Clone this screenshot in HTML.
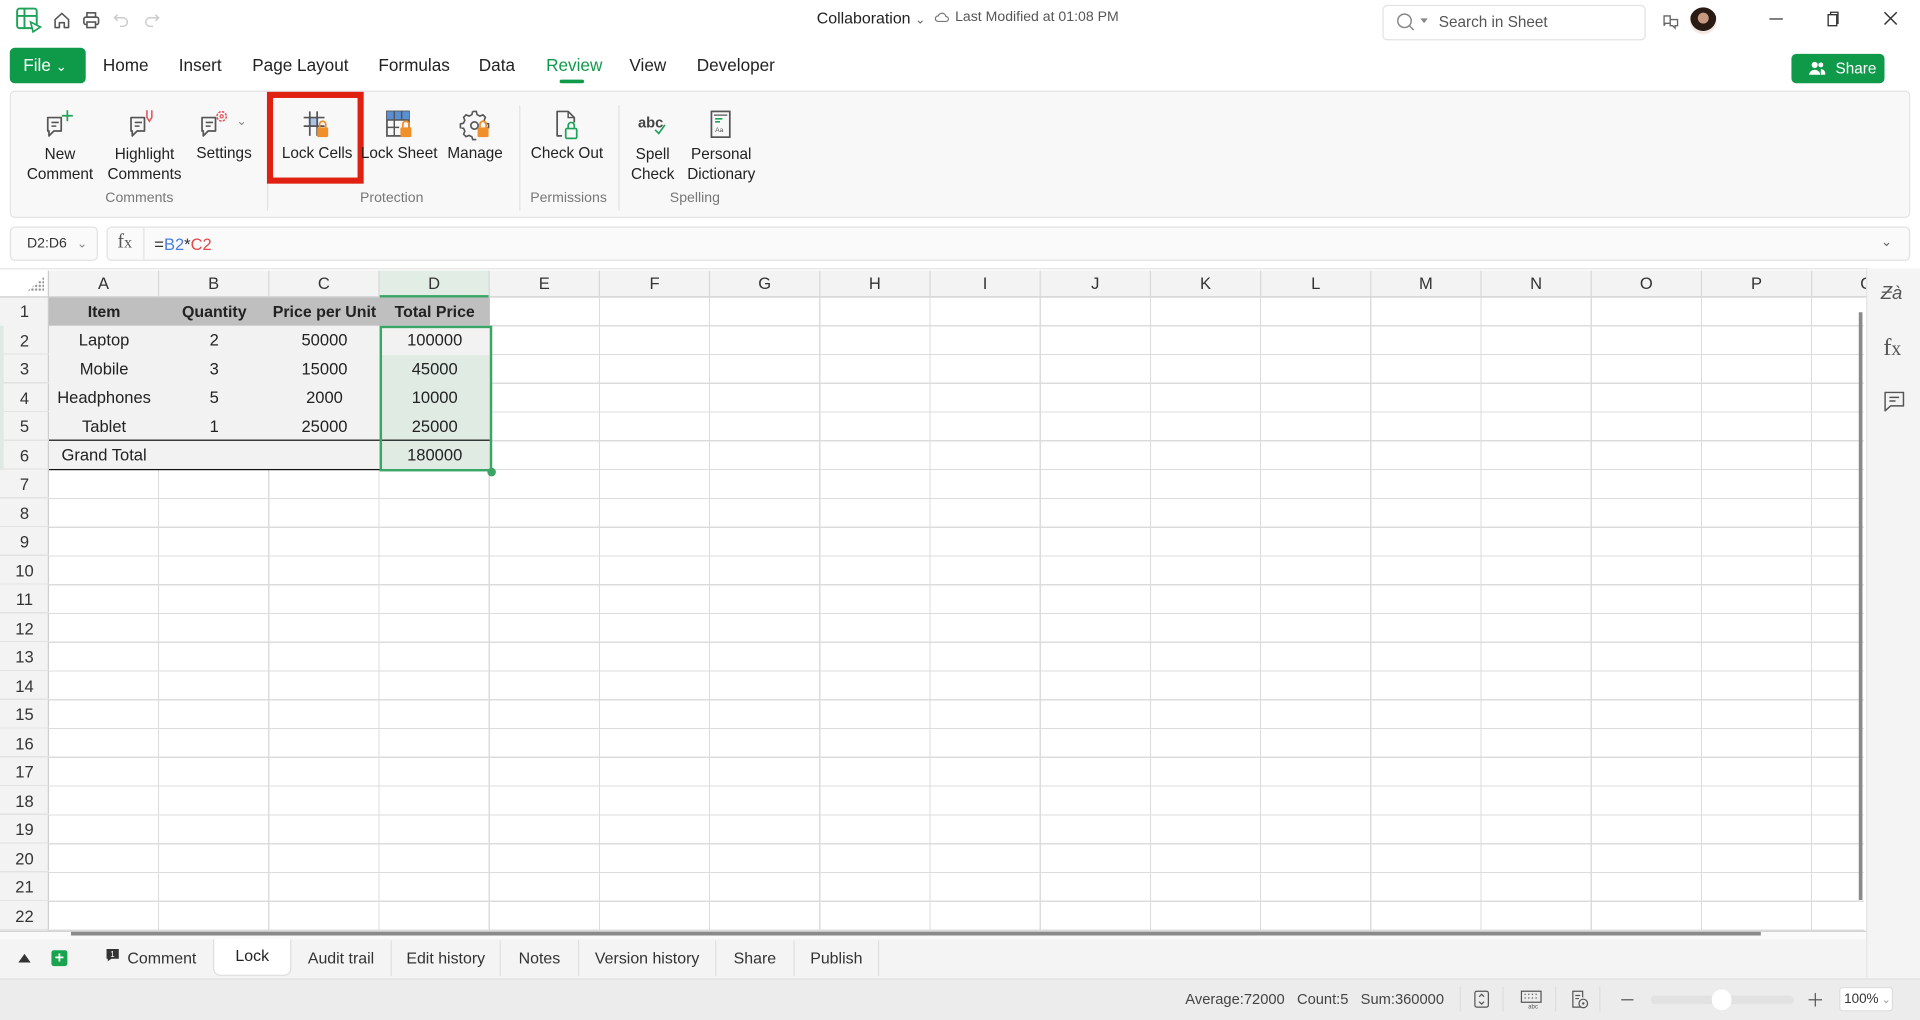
<!DOCTYPE html>
<html><head><meta charset="utf-8"><style>
*{box-sizing:border-box;margin:0;padding:0}
html,body{width:1920px;height:1020px;overflow:hidden;background:#fff}
#s{position:absolute;left:0;top:0;width:1568px;height:833px;transform:scale(1.22449);transform-origin:0 0;font-family:"Liberation Sans",sans-serif;color:#222;background:#fff}
.a{position:absolute}
.menu{font-size:14px;top:45px;color:#222}
.rb{position:absolute;top:118px;font-size:12.5px;text-align:center;line-height:16px;color:#222}
.grp{position:absolute;top:156px;font-size:11.5px;color:#777}
.ch{position:absolute;top:221px;height:22px;width:90px;text-align:center;font-size:13.5px;line-height:22px;color:#333;border-right:1px solid #d8d8d8}
.rh{position:absolute;left:0;width:40px;height:23.5px;text-align:center;font-size:13.5px;line-height:23.5px;color:#333}
.c{position:absolute;height:23.5px;width:90px;text-align:center;font-size:13.5px;line-height:23.5px;color:#222}
.hb{font-weight:bold;font-size:13px}
.tab{position:absolute;top:768px;height:29px;font-size:13px;line-height:29px;color:#333;border-right:1px solid #e0e0e0;text-align:center}
</style></head><body><div id="s">
<svg class="a" style="left:12px;top:6px" width="24" height="22" viewBox="0 0 24 22"><rect x="2" y="1" width="16" height="16" rx="2" fill="none" stroke="#1fa35a" stroke-width="1.6"/><path d="M2 7h16M8 1v16" stroke="#1fa35a" stroke-width="1.6"/><path d="M13 12l8 4-6 4z" fill="#fff" stroke="#1fa35a" stroke-width="1.4"/></svg>
<svg class="a" style="left:43px;top:9px" width="15" height="15" viewBox="0 0 15 15"><path d="M2 7l5.5-5 5.5 5v6.5h-3.5v-4h-4v4H2z" fill="none" stroke="#555" stroke-width="1.3" stroke-linejoin="round"/></svg>
<svg class="a" style="left:67px;top:9px" width="15" height="15" viewBox="0 0 15 15"><rect x="4" y="1.5" width="7" height="3.5" fill="none" stroke="#555" stroke-width="1.3"/><rect x="1.5" y="5" width="12" height="6" rx="1.5" fill="none" stroke="#555" stroke-width="1.3"/><rect x="4" y="9" width="7" height="4.5" fill="#fff" stroke="#555" stroke-width="1.3"/></svg>
<svg class="a" style="left:92px;top:9px" width="14" height="14" viewBox="0 0 14 14"><path d="M4 3L1.5 5.5 4 8M1.5 5.5h7a3.5 3.5 0 010 7H6" fill="none" stroke="#ccc" stroke-width="1.2"/></svg>
<svg class="a" style="left:117px;top:9px" width="14" height="14" viewBox="0 0 14 14"><path d="M10 3l2.5 2.5L10 8M12.5 5.5h-7a3.5 3.5 0 000 7H8" fill="none" stroke="#ccc" stroke-width="1.2"/></svg>
<div class="a" style="left:667px;top:7px;font-size:13px;color:#222">Collaboration <span style="font-size:10px;color:#666">&#8964;</span></div>
<svg class="a" style="left:763px;top:9px" width="12" height="10" viewBox="0 0 12 10"><path d="M3 8.5h6.5a2 2 0 000-4 3.2 3.2 0 00-6.2-.5A2.2 2.2 0 003 8.5z" fill="none" stroke="#777" stroke-width="1"/></svg>
<div class="a" style="left:780px;top:8px;font-size:11.5px;color:#555">Last Modified at 01:08 PM</div>
<div class="a" style="left:1129px;top:4px;width:215px;height:29px;border:1px solid #e2e2e2;border-radius:4px;background:#fff"></div>
<svg class="a" style="left:1140px;top:10px" width="30" height="17" viewBox="0 0 30 17"><circle cx="7" cy="7" r="5.5" fill="none" stroke="#888" stroke-width="1.2"/><path d="M11 11l3.5 3.5" stroke="#888" stroke-width="1.2"/><path d="M20 5h6l-3 4z" fill="#888"/></svg>
<div class="a" style="left:1175px;top:11px;font-size:12.5px;color:#555">Search in Sheet</div>
<svg class="a" style="left:1357px;top:9px" width="16" height="16" viewBox="0 0 16 16"><path d="M2 4h5v6H3l-1 2z M7 7h6v5h-2v2l-2-2H7z" fill="none" stroke="#666" stroke-width="1.1"/></svg>
<div class="a" style="left:1380px;top:6px;width:22px;height:22px;border-radius:50%;background:radial-gradient(circle at 50% 40%,#c89880 0 25%,#2a1a14 27% 60%,#f3e8e4 62%)"></div>
<div class="a" style="left:1445px;top:15px;width:11px;height:1.3px;background:#333"></div>
<svg class="a" style="left:1491px;top:9px" width="12" height="13" viewBox="0 0 12 13"><rect x="2" y="3" width="7" height="9" fill="none" stroke="#333" stroke-width="1.1"/><path d="M4 3V1h6v9H9" fill="none" stroke="#333" stroke-width="1.1"/></svg>
<svg class="a" style="left:1538px;top:9px" width="12" height="12" viewBox="0 0 12 12"><path d="M1 1l10 10M11 1L1 11" stroke="#333" stroke-width="1.2"/></svg>
<div class="a" style="left:8px;top:39px;width:62px;height:29px;border-radius:4px;background:#0f9a4a;color:#fff;font-size:14px;line-height:29px;padding-left:11px">File <span style="font-size:11px">&#8964;</span></div>
<div class="a menu" style="left:84px">Home</div>
<div class="a menu" style="left:146px">Insert</div>
<div class="a menu" style="left:206px">Page Layout</div>
<div class="a menu" style="left:309px">Formulas</div>
<div class="a menu" style="left:391px">Data</div>
<div class="a menu" style="left:446px;color:#0f9a4a">Review</div>
<div class="a" style="left:457px;top:65px;width:20px;height:3px;border-radius:2px;background:#0f9a4a"></div>
<div class="a menu" style="left:514px">View</div>
<div class="a menu" style="left:569px">Developer</div>
<div class="a" style="left:1463px;top:44px;width:76px;height:24px;border-radius:4px;background:#0f9a4a;color:#fff;font-size:12.5px;line-height:24px;padding-left:36px">Share</div>
<svg class="a" style="left:1477px;top:49px" width="14" height="13" viewBox="0 0 14 13"><circle cx="5" cy="4" r="2.5" fill="#fff"/><path d="M0.5 12a4.5 4 0 019 0z" fill="#fff"/><circle cx="10" cy="4" r="2" fill="#fff"/><path d="M10 7.5a3.5 3.5 0 013.5 4.5H10z" fill="#fff"/></svg>
<div class="a" style="left:8px;top:74px;width:1552px;height:104px;background:#f8f8f8;border:1px solid #e3e3e3;border-radius:4px"></div>
<div class="a" style="left:218px;top:86px;width:1px;height:86px;background:#e2e2e2"></div>
<div class="a" style="left:424px;top:86px;width:1px;height:86px;background:#e2e2e2"></div>
<div class="a" style="left:505px;top:86px;width:1px;height:86px;background:#e2e2e2"></div>
<svg class="a" style="left:36px;top:89px" width="26" height="26" viewBox="0 0 26 26"><path d="M3 7h11v11H8l-4 4v-4H3z" fill="none" stroke="#555" stroke-width="1.4" stroke-linejoin="round"/><path d="M6 11h6M6 14h4" stroke="#555" stroke-width="1.3"/><path d="M19 1v9M14.5 5.5h9" stroke="#1fa35a" stroke-width="1.4"/></svg>
<svg class="a" style="left:104px;top:89px" width="26" height="26" viewBox="0 0 26 26"><path d="M3 7h11v11H8l-4 4v-4H3z" fill="none" stroke="#555" stroke-width="1.4" stroke-linejoin="round"/><path d="M6 11h6M6 14h4" stroke="#555" stroke-width="1.3"/><path d="M16 1v6l2 3 2-3V1" fill="none" stroke="#e05560" stroke-width="1.3"/></svg>
<svg class="a" style="left:162px;top:89px" width="26" height="26" viewBox="0 0 26 26"><path d="M3 7h11v11H8l-4 4v-4H3z" fill="none" stroke="#555" stroke-width="1.4" stroke-linejoin="round"/><path d="M6 11h6M6 14h4" stroke="#555" stroke-width="1.3"/><circle cx="19" cy="6" r="3.8" fill="none" stroke="#e05560" stroke-width="1.3" stroke-dasharray="2 1"/><circle cx="19" cy="6" r="1.3" fill="none" stroke="#e05560"/></svg>
<div class="a" style="left:193px;top:94px;font-size:10px;color:#888">&#8964;</div>
<div class="a" style="left:218px;top:75px;width:79px;height:75px;border:5px solid #e02010"></div>
<svg class="a" style="left:246px;top:89px" width="26" height="26" viewBox="0 0 26 26"><rect x="6" y="7" width="8" height="7" fill="#a9c4e6"/><path d="M7 2v20M13 2v20M2 7h17M2 14h17" stroke="#555" stroke-width="1.4"/><rect x="13" y="15" width="9" height="8" rx="1" fill="#f0902a"/><path d="M15 15v-2.5a2.5 2.5 0 015 0V15" fill="none" stroke="#f0902a" stroke-width="1.4"/></svg>
<svg class="a" style="left:313px;top:89px" width="26" height="26" viewBox="0 0 26 26"><rect x="3" y="2" width="18" height="20" fill="none" stroke="#555" stroke-width="1.4"/><rect x="3" y="2" width="18" height="7" fill="#5b8fd4"/><path d="M9 2v20M15 2v7M3 9h18M3 15h10" stroke="#555" stroke-width="1.2"/><rect x="14" y="15" width="9" height="8" rx="1" fill="#f0902a"/><path d="M16 15v-2.5a2.5 2.5 0 015 0V15" fill="none" stroke="#f0902a" stroke-width="1.4"/></svg>
<svg class="a" style="left:375px;top:89px" width="26" height="26" viewBox="0 0 26 26"><path d="M11 2h3l.6 2.6 2.3 1.2 2.5-1 2 2-1 2.5 1.1 2.3 2.5.6v3l-2.6.6M11 2l-.6 2.6-2.3 1.2-2.5-1-2 2 1 2.5L3.5 11.6 1 12.2v3l2.6.6 1 2.3-1 2.5 2 2 2.5-1 2.3 1.1.6 2.3h3" fill="none" stroke="#555" stroke-width="1.3"/><circle cx="12.5" cy="13.5" r="3" fill="none" stroke="#555" stroke-width="1.3"/><rect x="15" y="15" width="9" height="8" rx="1" fill="#f0902a"/><path d="M17 15v-2.5a2.5 2.5 0 015 0V15" fill="none" stroke="#f0902a" stroke-width="1.4"/></svg>
<svg class="a" style="left:450px;top:89px" width="26" height="26" viewBox="0 0 26 26"><path d="M9 22H5V2h9l5 5v4" fill="none" stroke="#555" stroke-width="1.4" stroke-linejoin="round"/><path d="M14 2v5h5" fill="none" stroke="#555" stroke-width="1.2"/><rect x="12" y="16" width="9" height="8" rx="1" fill="none" stroke="#1fa35a" stroke-width="1.4"/><path d="M14 16v-2.5a2.5 2.5 0 015 0V16" fill="none" stroke="#1fa35a" stroke-width="1.4"/></svg>
<div class="a" style="left:521px;top:93px;font-size:12px;font-weight:bold;color:#444">abc</div>
<svg class="a" style="left:533px;top:100px" width="12" height="12" viewBox="0 0 12 12"><path d="M2 6l3 3 5-7" fill="none" stroke="#1fa35a" stroke-width="1.4"/></svg>
<svg class="a" style="left:576px;top:89px" width="26" height="26" viewBox="0 0 26 26"><rect x="5" y="2" width="15" height="21" fill="none" stroke="#555" stroke-width="1.4"/><path d="M7 5h11" stroke="#555"/><path d="M8 8h6M8 10.5h4" stroke="#1fa35a" stroke-width="1.3"/><text x="8" y="19" font-size="5.5" font-family="Liberation Sans" fill="#555">Aa</text></svg>
<div class="rb" style="left:20px;width:58px">New<br>Comment</div>
<div class="rb" style="left:86px;width:64px">Highlight<br>Comments</div>
<div class="rb" style="left:154px;width:58px;top:117px">Settings</div>
<div class="rb" style="left:226px;width:66px;top:117px">Lock Cells</div>
<div class="rb" style="left:294px;width:64px;top:117px">Lock Sheet</div>
<div class="rb" style="left:360px;width:56px;top:117px">Manage</div>
<div class="rb" style="left:430px;width:66px;top:117px">Check Out</div>
<div class="rb" style="left:510px;width:46px">Spell<br>Check</div>
<div class="rb" style="left:558px;width:62px">Personal<br>Dictionary</div>
<div class="grp" style="left:86px">Comments</div>
<div class="grp" style="left:294px">Protection</div>
<div class="grp" style="left:433px">Permissions</div>
<div class="grp" style="left:547px">Spelling</div>
<div class="a" style="left:8px;top:185px;width:72px;height:28px;border:1px solid #e2e2e2;border-radius:4px;background:#fafafa;font-size:11.5px;line-height:26px;padding-left:13px;color:#333">D2:D6 <span style="color:#888;font-size:10px;margin-left:5px">&#8964;</span></div>
<div class="a" style="left:87px;top:185px;width:1473px;height:28px;border:1px solid #e2e2e2;border-radius:4px;background:#fafafa"></div>
<div class="a" style="left:117px;top:186px;width:1px;height:26px;background:#e2e2e2"></div>
<div class="a" style="left:96px;top:189px;font-size:16px;color:#555;font-family:'Liberation Serif',serif">f<span style="font-size:13px">x</span></div>
<div class="a" style="left:126px;top:192px;font-size:13.5px;color:#333">=<span style="color:#4a7fd8">B2</span>*<span style="color:#e04a4a">C2</span></div>
<div class="a" style="left:1536px;top:191px;font-size:11px;color:#666">&#8964;</div>
<div class="a" style="left:0;top:219px;width:1524px;height:1px;background:#e3e3e3"></div>
<div class="a" style="left:0;top:221px;width:1524px;height:22px;background:#f3f3f3;border-bottom:1px solid #ccc"></div>
<div class="a" style="left:0;top:243px;width:40px;height:517px;background:#f3f3f3;border-right:1px solid #ccc"></div>
<div class="a" style="left:0;top:221px;width:40px;height:22px;background:#fff;border-right:1px solid #ccc;border-bottom:1px solid #ccc"></div>
<div class="a" style="left:22px;top:226px;width:14px;height:12px;background:radial-gradient(circle,#999 0.8px,transparent 1.2px) 0 0/3px 3px;clip-path:polygon(100% 0,100% 100%,0 100%)"></div>
<div class="a" style="left:40px;top:243px;width:1482px;height:519px;background:repeating-linear-gradient(90deg,transparent 0 89px,#dcdcdc 89px 90px),repeating-linear-gradient(180deg,transparent 0 22.5px,#dcdcdc 22.5px 23.5px)"></div>
<div class="a" style="left:0;top:266px;width:40px;height:494px;background:repeating-linear-gradient(180deg,transparent 0 22.5px,#e2e2e2 22.5px 23.5px)"></div>
<div class="a" style="left:0;top:266px;width:3px;height:117.5px;background:#dfeae2"></div>
<div class="a" style="left:310px;top:221px;width:90px;height:22px;background:#e2ede5;border-bottom:2px solid #3aa565"></div>
<div class="ch" style="left:40px">A</div><div class="ch" style="left:130px">B</div><div class="ch" style="left:220px">C</div><div class="ch" style="left:310px">D</div><div class="ch" style="left:400px">E</div><div class="ch" style="left:490px">F</div><div class="ch" style="left:580px">G</div><div class="ch" style="left:670px">H</div><div class="ch" style="left:760px">I</div><div class="ch" style="left:850px">J</div><div class="ch" style="left:940px">K</div><div class="ch" style="left:1030px">L</div><div class="ch" style="left:1120px">M</div><div class="ch" style="left:1210px">N</div><div class="ch" style="left:1300px">O</div><div class="ch" style="left:1390px">P</div><div class="ch" style="left:1480px">Q</div>
<div class="rh" style="top:243px">1</div><div class="rh" style="top:266.5px">2</div><div class="rh" style="top:290px">3</div><div class="rh" style="top:313.5px">4</div><div class="rh" style="top:337px">5</div><div class="rh" style="top:360.5px">6</div><div class="rh" style="top:384px">7</div><div class="rh" style="top:407.5px">8</div><div class="rh" style="top:431px">9</div><div class="rh" style="top:454.5px">10</div><div class="rh" style="top:478px">11</div><div class="rh" style="top:501.5px">12</div><div class="rh" style="top:525px">13</div><div class="rh" style="top:548.5px">14</div><div class="rh" style="top:572px">15</div><div class="rh" style="top:595.5px">16</div><div class="rh" style="top:619px">17</div><div class="rh" style="top:642.5px">18</div><div class="rh" style="top:666px">19</div><div class="rh" style="top:689.5px">20</div><div class="rh" style="top:713px">21</div><div class="rh" style="top:736.5px">22</div>
<div class="a" style="left:40px;top:243px;width:360px;height:23px;background:#bfbfbf"></div>
<div class="a" style="left:40px;top:266px;width:360px;height:118px;background:#f2f2f2"></div>
<div class="a" style="left:310px;top:290px;width:90px;height:94px;background:#e0ebe3"></div>
<div class="a" style="left:40px;top:359px;width:270px;height:1.3px;background:#111"></div>
<div class="a" style="left:310px;top:359px;width:90px;height:1.3px;background:#111"></div>
<div class="a" style="left:40px;top:383px;width:270px;height:1.3px;background:#111"></div>
<div class="c hb" style="left:40px;top:243px">Item</div><div class="c hb" style="left:130px;top:243px">Quantity</div><div class="c hb" style="left:220px;top:243px">Price per Unit</div><div class="c hb" style="left:310px;top:243px">Total Price</div>
<div class="c" style="left:40px;top:266px">Laptop</div><div class="c" style="left:130px;top:266px">2</div><div class="c" style="left:220px;top:266px">50000</div><div class="c" style="left:310px;top:266px">100000</div>
<div class="c" style="left:40px;top:289.5px">Mobile</div><div class="c" style="left:130px;top:289.5px">3</div><div class="c" style="left:220px;top:289.5px">15000</div><div class="c" style="left:310px;top:289.5px">45000</div>
<div class="c" style="left:40px;top:313px">Headphones</div><div class="c" style="left:130px;top:313px">5</div><div class="c" style="left:220px;top:313px">2000</div><div class="c" style="left:310px;top:313px">10000</div>
<div class="c" style="left:40px;top:336.5px">Tablet</div><div class="c" style="left:130px;top:336.5px">1</div><div class="c" style="left:220px;top:336.5px">25000</div><div class="c" style="left:310px;top:336.5px">25000</div>
<div class="c" style="left:40px;top:360px">Grand Total</div><div class="c" style="left:310px;top:360px">180000</div>
<div class="a" style="left:310px;top:266px;width:92px;height:119px;border:2px solid #3aa565"></div>
<div class="a" style="left:397.5px;top:381.5px;width:7px;height:7px;border-radius:50%;background:#3aa565"></div>
<div class="a" style="left:0;top:760px;width:1524px;height:7px;background:#fafafa;border-top:1px solid #ccc"></div>
<div class="a" style="left:58px;top:761px;width:1380px;height:3px;background:#8a8a8a"></div>
<div class="a" style="left:1518px;top:255px;width:3px;height:480px;background:#8a8a8a"></div>
<div class="a" style="left:1524px;top:219px;width:44px;height:580px;background:#f4f4f4;border-left:1px solid #e3e3e3"></div>
<div class="a" style="left:1536px;top:231px;font-size:15px;color:#555;font-style:italic">Ƶà</div>
<div class="a" style="left:1538px;top:273px;font-size:20px;color:#555;font-family:'Liberation Serif',serif">f<span style="font-size:16px">x</span></div>
<svg class="a" style="left:1538px;top:319px" width="18" height="18" viewBox="0 0 18 18"><path d="M1.5 1.5h15v11H6l-4.5 4z" fill="none" stroke="#555" stroke-width="1.2" stroke-linejoin="round"/><path d="M5 5.5h8M5 8.5h5" stroke="#555" stroke-width="1.2"/></svg>
<div class="a" style="left:0;top:767px;width:1524px;height:32px;background:#f4f4f4"></div>
<svg class="a" style="left:14px;top:777px" width="12" height="10" viewBox="0 0 12 10"><path d="M1 9L6 2l5 7z" fill="#333"/></svg>
<div class="a" style="left:42px;top:776px;width:13px;height:13px;border-radius:2px;background:#19a34e;color:#fff;font-size:13px;line-height:12px;text-align:center;font-weight:bold">+</div>
<svg class="a" style="left:86px;top:774px" width="12" height="12" viewBox="0 0 12 12"><path d="M1 1h10v8H5l-3 2V9H1z" fill="#333"/><text x="4" y="7.5" font-size="6.5" fill="#fff" font-family="Liberation Sans">1</text></svg>
<div class="tab" style="left:104px;top:768px;width:70px;border:none;text-align:left">Comment</div>
<div class="a" style="left:174px;top:767px;width:64px;height:30px;background:#fff;border:1px solid #ddd;border-top:none;border-radius:0 0 6px 6px;font-size:13px;line-height:28px;text-align:center;color:#222">Lock</div>
<div class="tab" style="left:238px;width:82px">Audit trail</div>
<div class="tab" style="left:320px;width:89px">Edit history</div>
<div class="tab" style="left:409px;width:64px">Notes</div>
<div class="tab" style="left:473px;width:112px">Version history</div>
<div class="tab" style="left:585px;width:64px">Share</div>
<div class="tab" style="left:649px;width:69px">Publish</div>
<div class="a" style="left:0;top:799px;width:1568px;height:34px;background:#ececec;border-top:1px solid #e0e0e0"></div>
<div class="a" style="left:968px;top:809px;font-size:12px;color:#444">Average:72000&nbsp;&nbsp;&nbsp;Count:5&nbsp;&nbsp;&nbsp;Sum:360000</div>
<div class="a" style="left:1192px;top:806px;width:1px;height:20px;background:#ddd"></div>
<svg class="a" style="left:1203px;top:808px" width="14" height="16" viewBox="0 0 14 16"><rect x="1.5" y="1.5" width="11" height="13" rx="1.5" fill="none" stroke="#555"/><path d="M5 6l2-2 2 2M5 10l2 2 2-2" fill="none" stroke="#555"/></svg>
<div class="a" style="left:1227px;top:806px;width:1px;height:20px;background:#ddd"></div>
<svg class="a" style="left:1241px;top:808px" width="20" height="16" viewBox="0 0 20 16"><rect x="1.5" y="1.5" width="16" height="9" fill="none" stroke="#555"/><path d="M4 4h1M7 4h1M10 4h1M13 4h1M4 7h1M7 7h1M10 7h1M13 7h1" stroke="#555"/><text x="7" y="15.5" font-size="5" fill="#555" font-family="Liberation Sans">abc</text></svg>
<div class="a" style="left:1270px;top:806px;width:1px;height:20px;background:#ddd"></div>
<svg class="a" style="left:1282px;top:808px" width="16" height="16" viewBox="0 0 16 16"><path d="M9 14.5H2.5v-13h8v5" fill="none" stroke="#555"/><path d="M4.5 5h4M4.5 7.5h3" stroke="#555"/><circle cx="11" cy="11.5" r="3.5" fill="none" stroke="#555"/><circle cx="11" cy="11.5" r="1" fill="#555"/></svg>
<div class="a" style="left:1306px;top:806px;width:1px;height:20px;background:#ddd"></div>
<div class="a" style="left:1324px;top:816px;width:10px;height:1.3px;background:#555"></div>
<div class="a" style="left:1348px;top:813px;width:117px;height:7px;border-radius:4px;background:#e2e2e2"></div>
<div class="a" style="left:1398px;top:808px;width:16px;height:17px;border-radius:8px;background:#fff"></div>
<div class="a" style="left:1477px;top:816px;width:11px;height:1.3px;background:#555"></div>
<div class="a" style="left:1482px;top:810.5px;width:1.3px;height:11px;background:#555"></div>
<div class="a" style="left:1502px;top:806px;width:44px;height:20px;border:1px solid #ddd;border-radius:3px;background:#fff;font-size:11px;line-height:18px;padding-left:3px;color:#333">100%<span style="color:#999;font-size:9px"> &#8964;</span></div>
</div></body></html>
